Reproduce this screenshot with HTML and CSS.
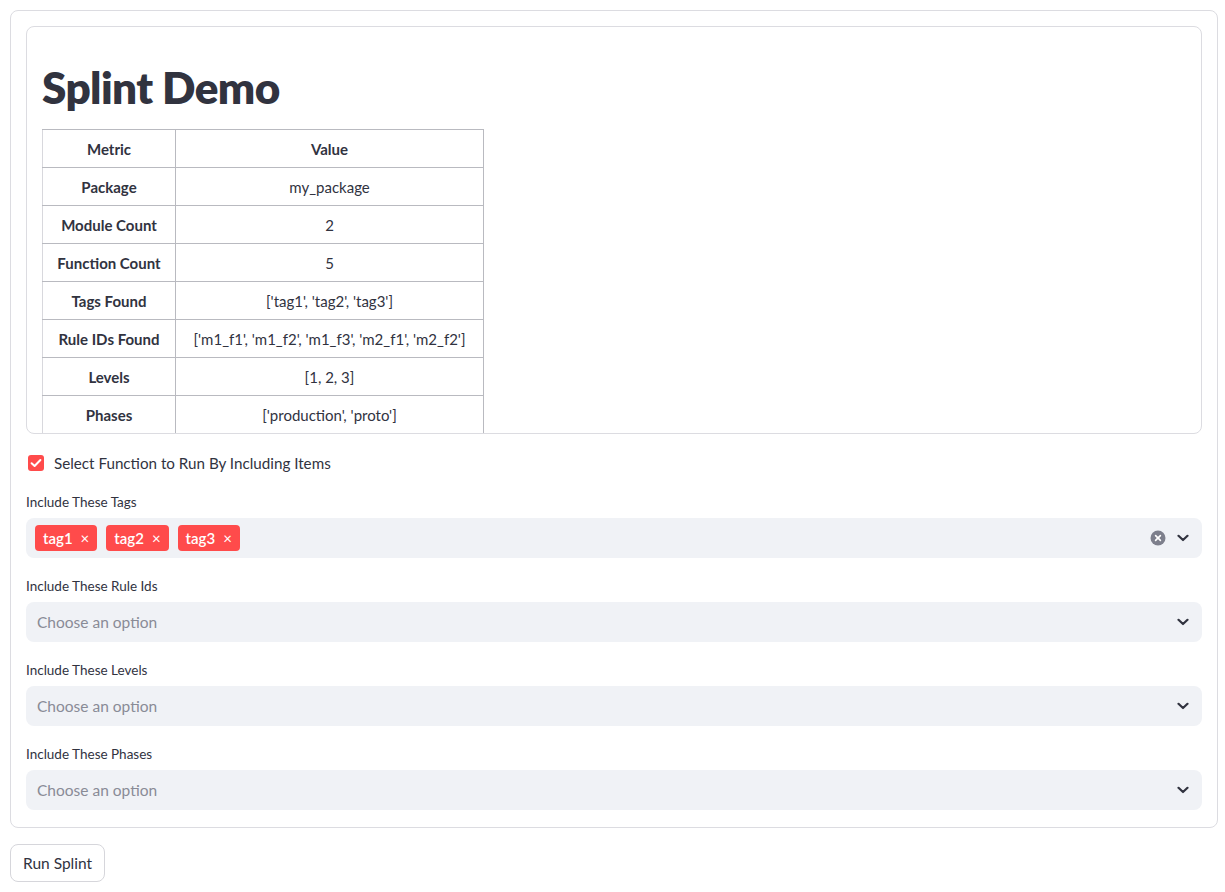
FILE: index.html
```html
<!DOCTYPE html>
<html lang="en">
<head>
<meta charset="utf-8">
<title>Splint Demo</title>
<link rel="stylesheet" href="styles.css">
</head>
<body>
<div class="page">
  <div class="form">
    <div class="scroll-box">
      <h1 class="title">Splint Demo</h1>
      <table class="metrics">
        <thead>
          <tr><th class="c1">Metric</th><th class="c2">Value</th></tr>
        </thead>
        <tbody>
          <tr><th>Package</th><td>my_package</td></tr>
          <tr><th>Module Count</th><td>2</td></tr>
          <tr><th>Function Count</th><td>5</td></tr>
          <tr><th>Tags Found</th><td>['tag1', 'tag2', 'tag3']</td></tr>
          <tr><th>Rule IDs Found</th><td>['m1_f1', 'm1_f2', 'm1_f3', 'm2_f1', 'm2_f2']</td></tr>
          <tr><th>Levels</th><td>[1, 2, 3]</td></tr>
          <tr><th>Phases</th><td>['production', 'proto']</td></tr>
        </tbody>
      </table>
    </div>

    <label class="checkbox-row">
      <span class="checkbox">
        <svg width="16" height="16" viewBox="0 0 16 16"><path d="M3.6 8.2 L6.6 11 L12.4 5" fill="none" stroke="#fff" stroke-width="2" stroke-linecap="round" stroke-linejoin="round"/></svg>
      </span>
      <span class="checkbox-label">Select Function to Run By Including Items</span>
    </label>

    <div class="field">
      <div class="field-label">Include These Tags</div>
      <div class="select">
        <div class="select-values">
          <span class="tag">tag1 <span class="tag-x">×</span></span>
          <span class="tag">tag2 <span class="tag-x">×</span></span>
          <span class="tag">tag3 <span class="tag-x">×</span></span>
        </div>
        <div class="select-icons">
          <svg class="clear" width="16" height="16" viewBox="0 0 16 16"><circle cx="8" cy="8" r="7.5" fill="#7d7f8c"/><path d="M5.6 5.6 L10.4 10.4 M10.4 5.6 L5.6 10.4" stroke="#fff" stroke-width="1.6" stroke-linecap="round"/></svg>
          <svg class="chev" width="12" height="8" viewBox="0 0 12 8"><path d="M1.5 1.8 L6 6 L10.5 1.8" fill="none" stroke="#31333f" stroke-width="2.2" stroke-linecap="round" stroke-linejoin="round"/></svg>
        </div>
      </div>
    </div>

    <div class="field">
      <div class="field-label">Include These Rule Ids</div>
      <div class="select">
        <div class="select-values"><span class="placeholder">Choose an option</span></div>
        <div class="select-icons">
          <svg class="chev" width="12" height="8" viewBox="0 0 12 8"><path d="M1.5 1.8 L6 6 L10.5 1.8" fill="none" stroke="#31333f" stroke-width="2.2" stroke-linecap="round" stroke-linejoin="round"/></svg>
        </div>
      </div>
    </div>

    <div class="field">
      <div class="field-label">Include These Levels</div>
      <div class="select">
        <div class="select-values"><span class="placeholder">Choose an option</span></div>
        <div class="select-icons">
          <svg class="chev" width="12" height="8" viewBox="0 0 12 8"><path d="M1.5 1.8 L6 6 L10.5 1.8" fill="none" stroke="#31333f" stroke-width="2.2" stroke-linecap="round" stroke-linejoin="round"/></svg>
        </div>
      </div>
    </div>

    <div class="field">
      <div class="field-label">Include These Phases</div>
      <div class="select">
        <div class="select-values"><span class="placeholder">Choose an option</span></div>
        <div class="select-icons">
          <svg class="chev" width="12" height="8" viewBox="0 0 12 8"><path d="M1.5 1.8 L6 6 L10.5 1.8" fill="none" stroke="#31333f" stroke-width="2.2" stroke-linecap="round" stroke-linejoin="round"/></svg>
        </div>
      </div>
    </div>
  </div>

  <button class="run-btn" type="button">Run Splint</button>
</div>
</body>
</html>
```

FILE: styles.css
```css
* { box-sizing: border-box; }

html, body {
  margin: 0;
  padding: 0;
  background: #ffffff;
}

body {
  font-family: "Lato", "Noto Sans", "Liberation Sans", sans-serif;
  color: #31333f;
}

.page {
  padding: 10px 7px 10px 10px;
  display: flex;
  flex-direction: column;
  align-items: flex-start;
  gap: 16px;
}

.form {
  width: 100%;
  border: 1px solid #dcdce1;
  border-radius: 8px;
  padding: 15px 15px 17px 15px;
  display: flex;
  flex-direction: column;
  gap: 16px;
}

.scroll-box {
  height: 408px;
  overflow: hidden;
  border: 1px solid #dcdce1;
  border-radius: 8px;
  padding: 0 15px;
}

.title {
  margin: 0;
  padding: 34px 0 16px 0;
  font-size: 44px;
  line-height: 52px;
  font-weight: 800;
  letter-spacing: -0.6px;
  color: #31333f;
}

.metrics {
  border-collapse: collapse;
  font-size: 15px;
  color: #31333f;
}

.metrics th,
.metrics td {
  height: 38px;
  padding: 0 10px;
  text-align: center;
  border: 1px solid #b9bac0;
  white-space: nowrap;
}

.metrics th {
  font-weight: 700;
}

.metrics td {
  font-weight: 400;
}

.metrics tr > :first-child {
  border-left-color: #d8d8dd;
}

.metrics .c1 { width: 133px; }
.metrics .c2 { width: 308px; }

.checkbox-row {
  display: flex;
  align-items: center;
  gap: 10px;
  height: 24px;
  padding-left: 2px;
  padding-top: 1px;
  font-size: 15.2px;
}

.checkbox {
  width: 16px;
  height: 16px;
  border-radius: 3px;
  background: #ff4b4b;
  display: flex;
  align-items: center;
  justify-content: center;
}

.field {
  display: flex;
  flex-direction: column;
}

.field-label {
  font-size: 13.5px;
  height: 28px;
  line-height: 24px;
}

.select {
  height: 40px;
  background: #f0f2f6;
  border-radius: 8px;
  display: flex;
  align-items: center;
  justify-content: space-between;
  padding: 0 13px 0 9px;
}

.select-values {
  display: flex;
  align-items: center;
  gap: 9px;
}

.placeholder {
  font-size: 15.5px;
  color: #898b96;
  padding-left: 2px;
}

.tag {
  display: inline-flex;
  align-items: center;
  gap: 8px;
  height: 26px;
  padding: 0 8px 0 8px;
  background: #ff4b4b;
  color: #ffffff;
  font-size: 15px;
  font-weight: 600;
  border-radius: 4px;
}

.tag-x {
  font-size: 15px;
  font-weight: 400;
}

.select-icons {
  display: flex;
  align-items: center;
  gap: 11px;
}

.run-btn {
  font-family: inherit;
  font-size: 15.5px;
  color: #31333f;
  background: #ffffff;
  border: 1px solid #d6d6db;
  border-radius: 8px;
  height: 38px;
  padding: 0 12px;
}
```
